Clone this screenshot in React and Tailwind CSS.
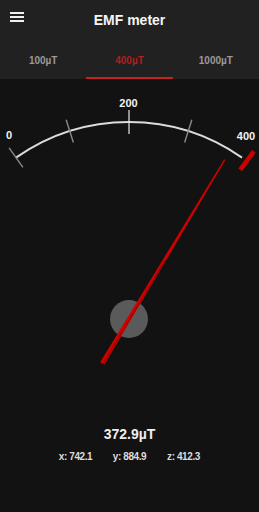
import React from "react";

const font = { fontFamily: '"Liberation Sans", Arial, sans-serif' };

function Gauge() {
  const cx = 129;
  const cy = 319;
  const ticks = [
    { a: -35, c: "#8a8a8a", w: 1.4 },
    { a: -17.5, c: "#8a8a8a", w: 1.4 },
    { a: 0, c: "#e6e6e6", w: 1.2 },
    { a: 17.5, c: "#8a8a8a", w: 1.4 },
  ];
  return (
    <svg
      width="259"
      height="329"
      viewBox="0 79 259 329"
      className="block"
    >
      <path
        d="M 16 157.6 A 197 197 0 0 1 242 157.6"
        fill="none"
        stroke="#dcdcdc"
        strokeWidth="2"
      />
      {ticks.map((t, i) => (
        <line
          key={i}
          x1={cx}
          y1={cy - 209}
          x2={cx}
          y2={cy - 185}
          stroke={t.c}
          strokeWidth={t.w}
          transform={`rotate(${t.a} ${cx} ${cy})`}
        />
      ))}
      <line
        x1={cx}
        y1={cy - 209}
        x2={cx}
        y2={cy - 186}
        stroke="#cc0000"
        strokeWidth="4.5"
        transform={`rotate(36.7 ${cx} ${cy})`}
      />
      <g fill="#f2f2f2" fontSize="11" fontWeight="700" style={font} textAnchor="middle">
        <text x="9" y="139">0</text>
        <text x="128.5" y="107">200</text>
        <text x="246" y="140">400</text>
      </g>
      <circle cx={cx} cy={cy} r="19" fill="#5a5a5a" />
      <g transform={`rotate(31 ${cx} ${cy})`}>
        <polygon
          points={`128.3,133 129.7,133 131.4,371 126.6,371`}
          fill="#d00000"
        />
        <line x1="129.6" y1="250" x2="129.9" y2="371" stroke="#8a0000" strokeWidth="0.8" />
      </g>
    </svg>
  );
}

export default function App() {
  return (
    <div className="w-[259px] h-[512px] bg-[#121212] overflow-hidden" style={font}>
      <div className="bg-[#212121]">
        <div className="grid grid-cols-[34px_1fr_34px] h-[40px]">
          <div className="pl-[10px] pt-[12px] flex flex-col gap-[2px]">
            <div className="w-[14px] h-[2px] bg-[#f0f0f0]" />
            <div className="w-[14px] h-[2px] bg-[#f0f0f0]" />
            <div className="w-[14px] h-[2px] bg-[#f0f0f0]" />
          </div>
          <div className="flex items-center justify-center text-[14px] font-bold text-[#f5f5f5]">
            EMF meter
          </div>
          <div />
        </div>
        <div className="grid grid-cols-3 h-[39px] text-[10px] font-bold">
          <div className="flex items-center justify-center pt-[2px] text-[#9a9a9a]">100µT</div>
          <div className="relative flex items-center justify-center pt-[2px] text-[#b21d1d]">
            400µT
            <div className="absolute left-0 right-0 bottom-0 h-[2px] bg-[#c62020]" />
          </div>
          <div className="flex items-center justify-center pt-[2px] text-[#9a9a9a]">1000µT</div>
        </div>
      </div>
      <Gauge />
      <div className="pt-[16px] text-center text-[14px] leading-[20px] font-bold text-[#eeeeee]">
        372.9µT
      </div>
      <div className="mt-[6px] grid grid-cols-[1fr_54px_54px_54px_1fr] text-[10px] leading-[14px] font-bold text-[#dddddd] tracking-[-0.4px]">
        <div />
        <div className="text-center">x: 742.1</div>
        <div className="text-center">y: 884.9</div>
        <div className="text-center">z: 412.3</div>
        <div />
      </div>
    </div>
  );
}
